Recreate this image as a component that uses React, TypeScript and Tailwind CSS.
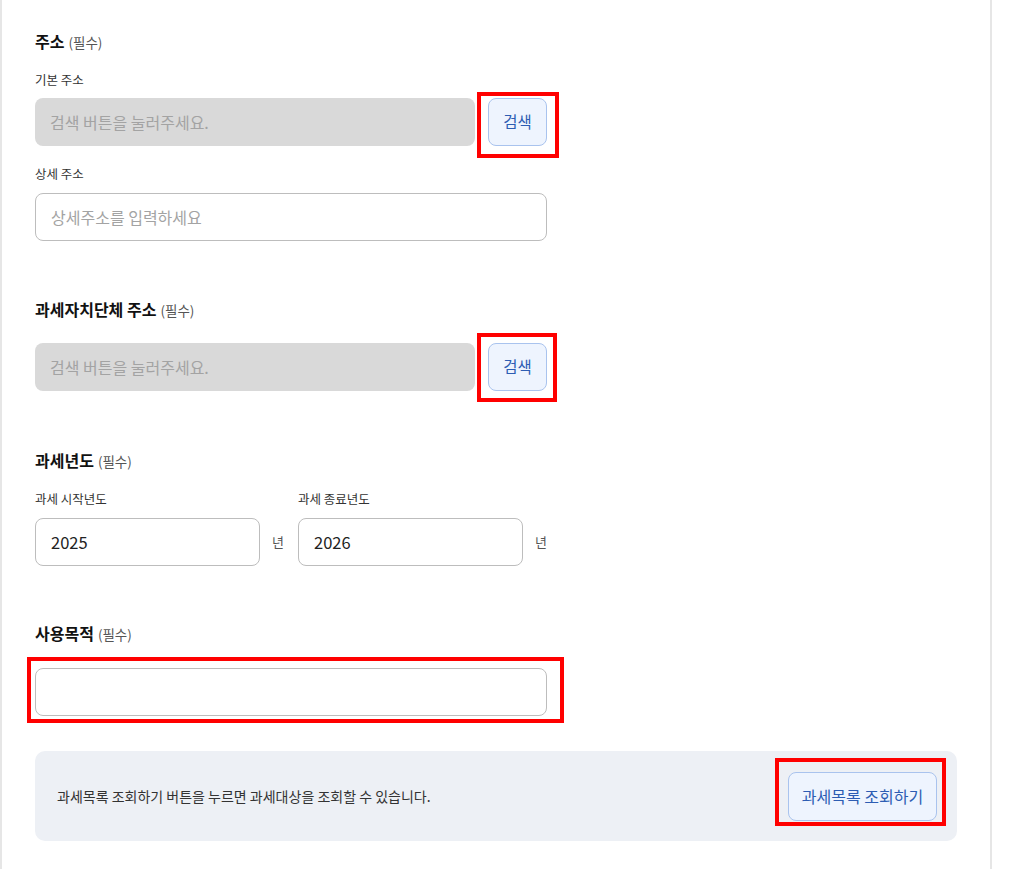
import React from 'react';

const font = { fontFamily: '"Noto Sans CJK KR", "Noto Sans", sans-serif' };

function Heading({ title }: { title: string }) {
  return (
    <div className="flex items-baseline h-[22px] leading-[22px]">
      <span className="text-[16px] font-bold text-[#111]">{title}</span>
      <span className="ml-1 text-[13.5px] text-[#555]">(필수)</span>
    </div>
  );
}

function SubLabel({ children }: { children: React.ReactNode }) {
  return <div className="h-[18px] leading-[18px] text-[12.5px] text-[#333]">{children}</div>;
}

// red annotation box laid over a control
function Mark({ className }: { className: string }) {
  return <div className={`pointer-events-none absolute border-4 border-[#ff0000] ${className}`} />;
}

function SearchRow({ markClass }: { markClass: string }) {
  return (
    <div className="flex items-center">
      <div className="flex h-12 w-[440px] items-center rounded-lg bg-[#d9d9d9] px-[15px] text-[16px] text-[#a3a3a3]">
        검색 버튼을 눌러주세요.
      </div>
      <div className="relative ml-[13px]">
        <button className="h-12 w-[59px] rounded-lg border border-[#a9c3ee] bg-[#eef4fe] text-[15.5px] text-[#2d5db3]">
          검색
        </button>
        <Mark className={markClass} />
      </div>
    </div>
  );
}

function YearField({ label, value }: { label: string; value: string }) {
  return (
    <div className="w-[263px]">
      <SubLabel>{label}</SubLabel>
      <div className="mt-[10px] flex items-center">
        <div className="flex h-12 w-[225px] items-center rounded-lg border border-[#bdbdbd] px-[15px] text-[16.5px] text-[#222]">
          {value}
        </div>
        <span className="ml-3 text-[13px] text-[#555]">년</span>
      </div>
    </div>
  );
}

export default function App() {
  return (
    <div className="min-h-screen bg-white" style={font}>
      <div className="min-h-screen w-[992px] border-x-2 border-[#e6e6e6] px-[33px] pt-[30px] pb-[28px]">
        {/* 주소 */}
        <Heading title="주소" />
        <div className="mt-[19px]">
          <SubLabel>기본 주소</SubLabel>
        </div>
        <div className="mt-[9px]">
          <SearchRow markClass="-left-[11px] -top-[6px] -right-[12px] -bottom-[12px]" />
        </div>
        <div className="mt-[19px]">
          <SubLabel>상세 주소</SubLabel>
        </div>
        <div className="mt-[10px] flex h-12 w-[512px] items-center rounded-lg border border-[#bdbdbd] px-[15px] text-[16px] text-[#a3a3a3]">
          상세주소를 입력하세요
        </div>

        {/* 과세자치단체 주소 */}
        <div className="mt-[57px]">
          <Heading title="과세자치단체 주소" />
        </div>
        <div className="mt-[23px]">
          <SearchRow markClass="-left-[11px] -top-[10px] -right-[10px] -bottom-[11px]" />
        </div>

        {/* 과세년도 */}
        <div className="mt-[58px]">
          <Heading title="과세년도" />
        </div>
        <div className="mt-[19px] flex">
          <YearField label="과세 시작년도" value="2025" />
          <YearField label="과세 종료년도" value="2026" />
        </div>

        {/* 사용목적 */}
        <div className="mt-[56px]">
          <Heading title="사용목적" />
        </div>
        <div className="relative mt-[24px] w-[512px]">
          <div className="h-12 w-full rounded-lg border border-[#bdbdbd]" />
          <Mark className="-left-[8px] -top-[11px] -right-[17px] -bottom-[7px]" />
        </div>

        {/* 안내 박스 */}
        <div className="mt-[35px] flex h-[90px] w-[922px] items-center justify-between rounded-[10px] bg-[#edf0f5] pl-[22px] pr-[20px]">
          <span className="text-[14px] text-[#333]">과세목록 조회하기 버튼을 누르면 과세대상을 조회할 수 있습니다.</span>
          <div className="relative">
            <button className="h-[49px] w-[149px] rounded-lg border border-[#a9c3ee] bg-[#eef4fe] text-[16px] text-[#2d5db3]">
              과세목록 조회하기
            </button>
            <Mark className="-left-[13px] -top-[14px] -right-[9px] -bottom-[5px]" />
          </div>
        </div>
      </div>
    </div>
  );
}
